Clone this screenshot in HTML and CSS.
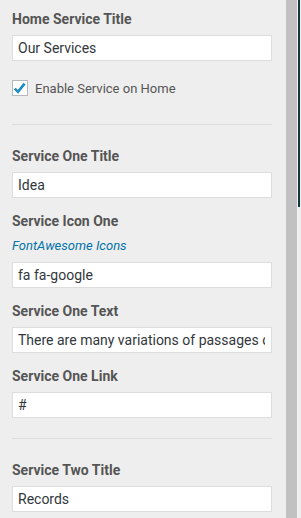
FILE: index.html
```html
<!DOCTYPE html>
<html lang="en">
<head>
<meta charset="utf-8">
<title>Customizer - Services</title>
<link rel="stylesheet" href="styles.css">
</head>
<body>
<div class="app">
  <div class="panel">
    <div class="control">
      <label class="control-title">Home Service Title</label>
      <input class="text-input" type="text" value="Our Services">
    </div>
    <label class="checkbox-row">
      <span class="checkbox">
        <svg width="14" height="14" viewBox="0 0 14 14"><polyline points="1.8,7.6 5,10.8 11.6,2.6" fill="none" stroke="#1e8cbe" stroke-width="2.6"/></svg>
      </span>
      <span class="checkbox-label">Enable Service on Home</span>
    </label>
    <hr class="divider divider-first">

    <div class="control">
      <label class="control-title">Service One Title</label>
      <input class="text-input" type="text" value="Idea">
    </div>
    <div class="control">
      <label class="control-title title-tight">Service Icon One</label>
      <a class="icon-link">FontAwesome Icons</a>
      <input class="text-input" type="text" value="fa fa-google">
    </div>
    <div class="control">
      <label class="control-title">Service One Text</label>
      <input class="text-input" type="text" value="There are many variations of passages of Lorem Ipsum available">
    </div>
    <div class="control">
      <label class="control-title">Service One Link</label>
      <input class="text-input" type="text" value="#">
    </div>
    <hr class="divider divider-second">

    <div class="control">
      <label class="control-title">Service Two Title</label>
      <input class="text-input" type="text" value="Records">
    </div>
  </div>
  <div class="scrollbar"></div>
  <div class="edge">
    <div class="edge-light"></div>
    <div class="edge-line"><div class="edge-dark"></div></div>
    <div class="edge-end"></div>
  </div>
</div>
</body>
</html>
```

FILE: styles.css
```css
html, body {
  margin: 0;
  padding: 0;
  background: #eeeeee;
}

body {
  font-family: Roboto, "Noto Sans", "Liberation Sans", sans-serif;
  overflow: hidden;
}

.app {
  display: flex;
  height: 518px;
  overflow: hidden;
}

.panel {
  width: 286px;
  flex: 0 0 286px;
  box-sizing: border-box;
  padding: 9px 14px 0 12px;
  background: #eeeeee;
}

.control {
  display: flex;
  flex-direction: column;
  margin-bottom: 13px;
}

.control-title {
  display: block;
  font-size: 14px;
  line-height: 20px;
  font-weight: 700;
  color: #555555;
  margin-bottom: 6px;
}

.title-tight {
  margin-bottom: 5px;
}

.icon-link {
  display: block;
  font-size: 13px;
  line-height: 20px;
  font-style: italic;
  color: #0073aa;
  margin-bottom: 6px;
}

.text-input {
  display: block;
  box-sizing: border-box;
  width: 260px;
  height: 26px;
  margin: 0;
  padding: 0 6px 0 5px;
  border: 1px solid #dddddd;
  border-radius: 0;
  background: #ffffff;
  font-family: Roboto, "Noto Sans", "Liberation Sans", sans-serif;
  font-size: 14px;
  color: #32373c;
  outline: none;
}

.checkbox-row {
  display: flex;
  align-items: center;
  gap: 7px;
  height: 16px;
  margin-top: 19px;
}

.checkbox {
  display: flex;
  align-items: center;
  justify-content: center;
  box-sizing: border-box;
  width: 16px;
  height: 16px;
  border: 1px solid #b4b9be;
  background: #ffffff;
}

.checkbox-label {
  font-size: 13px;
  color: #555555;
}

.divider {
  border: 0;
  height: 1px;
  background: #dddddd;
  width: 260px;
  margin: 0;
}

.divider-first {
  margin-top: 28px;
  margin-bottom: 21px;
}

.divider-second {
  margin-top: 20px;
  margin-bottom: 21px;
}

.scrollbar {
  flex: 0 0 11px;
  background: #c1c1c1;
}

.edge {
  flex: 0 0 4px;
  display: flex;
}

.edge-light {
  flex: 0 0 1px;
  background: #f1f1f1;
}

.edge-line {
  flex: 0 0 2px;
  background: #eeeeee;
}

.edge-dark {
  height: 207px;
  background: #16343c;
}

.edge-end {
  flex: 0 0 1px;
  background: #eeeeee;
}
```
